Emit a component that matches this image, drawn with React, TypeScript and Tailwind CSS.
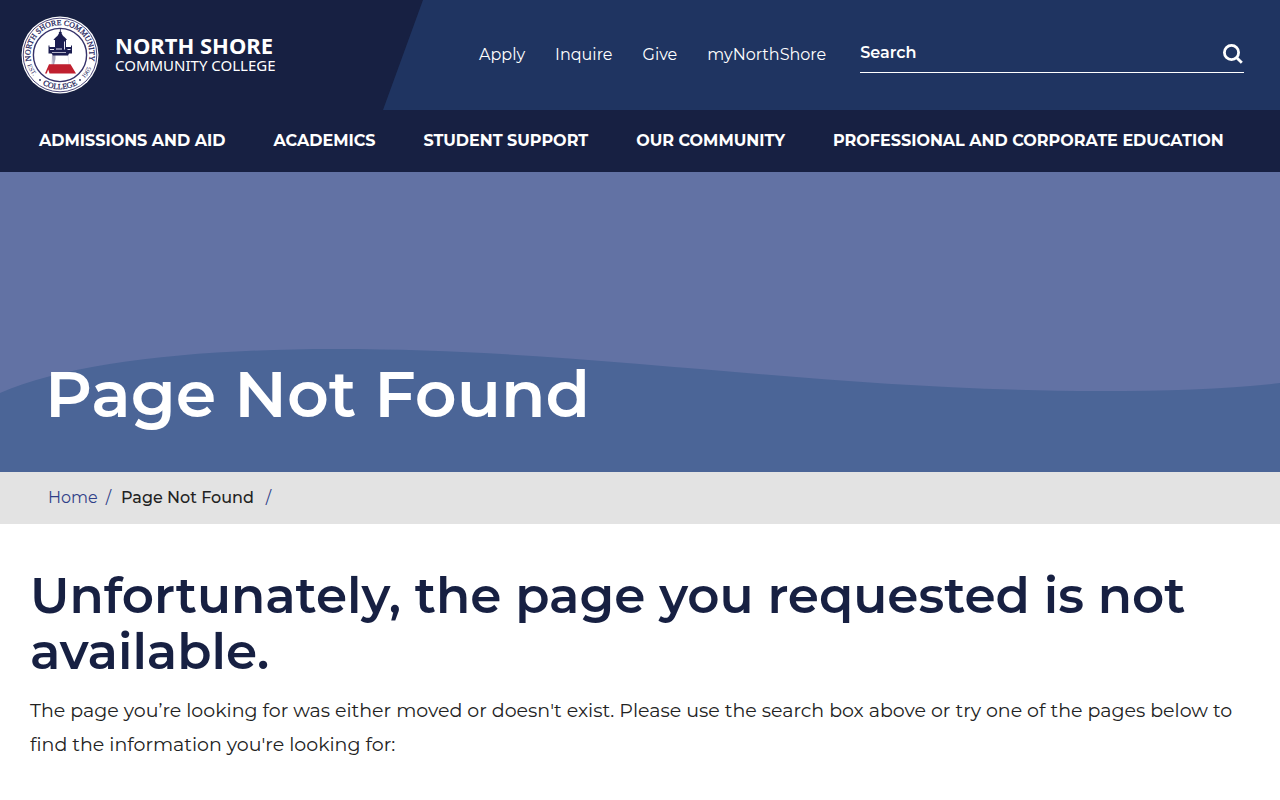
import * as React from "react";
import { useState } from "react";

const utilityLinks = ["Apply", "Inquire", "Give", "myNorthShore"];

const mainLinks = [
  "Admissions and Aid",
  "Academics",
  "Student Support",
  "Our Community",
  "Professional and Corporate Education",
];

const Seal = () => (
  <svg viewBox="0 0 78 78" className="h-[78px] w-[78px] shrink-0" aria-hidden="true">
    <defs>
      <path id="seal-top" d="M 10.2 45 A 29.5 29.5 0 1 1 67.8 45" />
      <path id="seal-bottom" d="M 15 63.5 A 34.3 34.3 0 0 0 63 63.5" />
      <path id="seal-est" d="M 5.6 46 A 34 34 0 0 0 20 67" />
      <path id="seal-year" d="M 57 67.8 A 34 34 0 0 0 72.4 45" />
    </defs>
    <circle cx="39" cy="39" r="38.5" fill="#fff" />
    <circle cx="39" cy="39" r="36.8" fill="none" stroke="#4b4779" strokeWidth="1" />
    <circle cx="39" cy="39" r="26.6" fill="none" stroke="#35326a" strokeWidth="1.4" />
    <g fill="#25245c" fontFamily="Liberation Serif, serif">
      <text fontSize="7.8" stroke="#25245c" strokeWidth="0.25">
        <textPath href="#seal-top" startOffset="50%" textAnchor="middle">NORTH SHORE COMMUNITY</textPath>
      </text>
      <text fontSize="8" stroke="#25245c" strokeWidth="0.25">
        <textPath href="#seal-bottom" startOffset="50%" textAnchor="middle">COLLEGE</textPath>
      </text>
      <text fontSize="6.5">
        <textPath href="#seal-est" startOffset="3">EST.</textPath>
      </text>
      <text fontSize="6.5">
        <textPath href="#seal-year" startOffset="8">1965</textPath>
      </text>
      <circle cx="19" cy="64" r="0.9" />
      <circle cx="59" cy="64" r="0.9" />
    </g>
    {/* Lighthouse */}
    <path d="M31.500 39 H47 L48 49 H30.500 Z" fill="#fff" stroke="#c9c6d6" strokeWidth="0.5" />
    <path d="M31 39 H34.500 V43 L33 49 H31.500 Z" fill="#a9a7bd" />
    <g fill="#1b1d50">
      <path d="M38.900 12.500 h0.800 v4 h-0.800 z" />
      <circle cx="39.300" cy="17" r="1.600" />
      <path d="M37.500 18 H41 C41.500 20.500 44.500 21 46 24 H32.500 C34 21 37 20.500 37.500 18 Z" />
      <path d="M34 24 H45 V31 H34 Z" />
      <path d="M27.500 29.500 h1 v1.500 h21.500 v-1.500 h1 v8 h-3 l-1 2 h-15 l-1.500 -2 h-3 z" />
    </g>
    <path d="M29 33 h4 v1 h-4 z M46.500 33 h3 v1 h-3 z M35 32.500 h6 v1 h-6 z M43 25.500 h1 v8 h-1 z M31 36 h14 v0.800 h-14 z" fill="#e5e4ef" />
    <path d="M28 48.200 L49.500 48.200 L55 57.500 H28.500 L27.200 53.500 L25.800 57.500 H24 Z" fill="#c0202f" />
  </svg>
);

const SearchIcon = () => (
  <svg viewBox="0 0 20 20" className="h-5 w-5" fill="none" stroke="currentColor" strokeWidth="2.8" aria-hidden="true">
    <circle cx="8.5" cy="8.5" r="7.1" />
    <path d="M13.5 13.5 L18.800 18.800" />
  </svg>
);

const Header = () => {
  const [searchQuery, setSearchQuery] = useState("");

  return (
    <header className="text-white">
      <div className="flex h-[110px] bg-[#1f3461]">
        <div className="w-[423px] shrink-0 bg-[#172042] pl-[21px] [clip-path:polygon(0_0,100%_0,383px_100%,0_100%)]">
          <a href="#" className="flex h-full items-center gap-4">
            <Seal />
            <span className="flex flex-col pb-1 font-['Noto_Sans',sans-serif]">
              <span className="text-[22px] font-bold leading-6">NORTH SHORE</span>
              <span className="text-[15px] leading-4">COMMUNITY COLLEGE</span>
            </span>
          </a>
        </div>
        <nav aria-label="Quick links" className="ml-14 flex shrink-0 items-center gap-[30px] text-base">
          {utilityLinks.map((label) => (
            <a key={label} href="#" className="hover:underline">{label}</a>
          ))}
        </nav>
        <form
          onSubmit={(e) => e.preventDefault()}
          className="mb-[37px] ml-[34px] mr-9 mt-[35px] flex min-w-0 grow items-center justify-between border-b border-white"
        >
          <input
            type="text"
            aria-label="Search"
            placeholder="Search"
            value={searchQuery}
            onChange={(e) => setSearchQuery(e.target.value)}
            className="min-w-0 grow bg-transparent pb-0.5 text-base font-semibold placeholder:text-white focus:outline-none"
          />
          <button type="submit" aria-label="Submit search" className="pr-px">
            <SearchIcon />
          </button>
        </form>
      </div>
      <nav aria-label="Main" className="flex h-[62px] items-center gap-12 bg-[#172042] px-[39px] text-base font-bold uppercase">
        {mainLinks.map((label) => (
          <a key={label} href="#" className="hover:underline">{label}</a>
        ))}
      </nav>
    </header>
  );
};

const Hero = () => (
  <section className="relative flex h-[300px] items-end bg-[#6272a4] px-[45px] pb-9">
    <svg viewBox="0 0 1280 300" preserveAspectRatio="none" className="absolute inset-0 h-full w-full" aria-hidden="true">
      <path d="M0 221 C70 190 200 177 335 177 C600 177 820 219 1100 219 C1170 219 1230 217 1280 211 V300 H0 Z" fill="#4b6597" />
    </svg>
    <h1 className="relative text-[65px] font-semibold leading-[84px] text-white">Page Not Found</h1>
  </section>
);

const Breadcrumbs = () => (
  <nav aria-label="Breadcrumb" className="bg-[#e3e3e3] px-12 py-[14px]">
    <ol className="flex gap-[10px] text-base leading-6 text-[#2f3f88]">
      <li>
        <a href="#" className="hover:underline">Home</a>
        <span className="ml-2">/</span>
      </li>
      <li>
        <span className="font-medium text-[#222]" aria-current="page">Page Not Found</span>
        <span className="ml-3">/</span>
      </li>
    </ol>
  </nav>
);

const App = () => (
  <div className="min-h-screen bg-white font-['Montserrat',Inter,sans-serif]">
    <Header />
    <Hero />
    <Breadcrumbs />
    <main className="px-[30px] py-11">
      <h2 className="text-[50px] font-semibold leading-14 text-[#172042]">
        Unfortunately, the page you requested is not available.
      </h2>
      <p className="mt-[14px] text-[19px] leading-[34px] text-[#222]">
        The page you’re looking for was either moved or doesn't exist. Please use the search box above or try one of the pages below to find the information you're looking for:
      </p>
    </main>
  </div>
);

export default App;
